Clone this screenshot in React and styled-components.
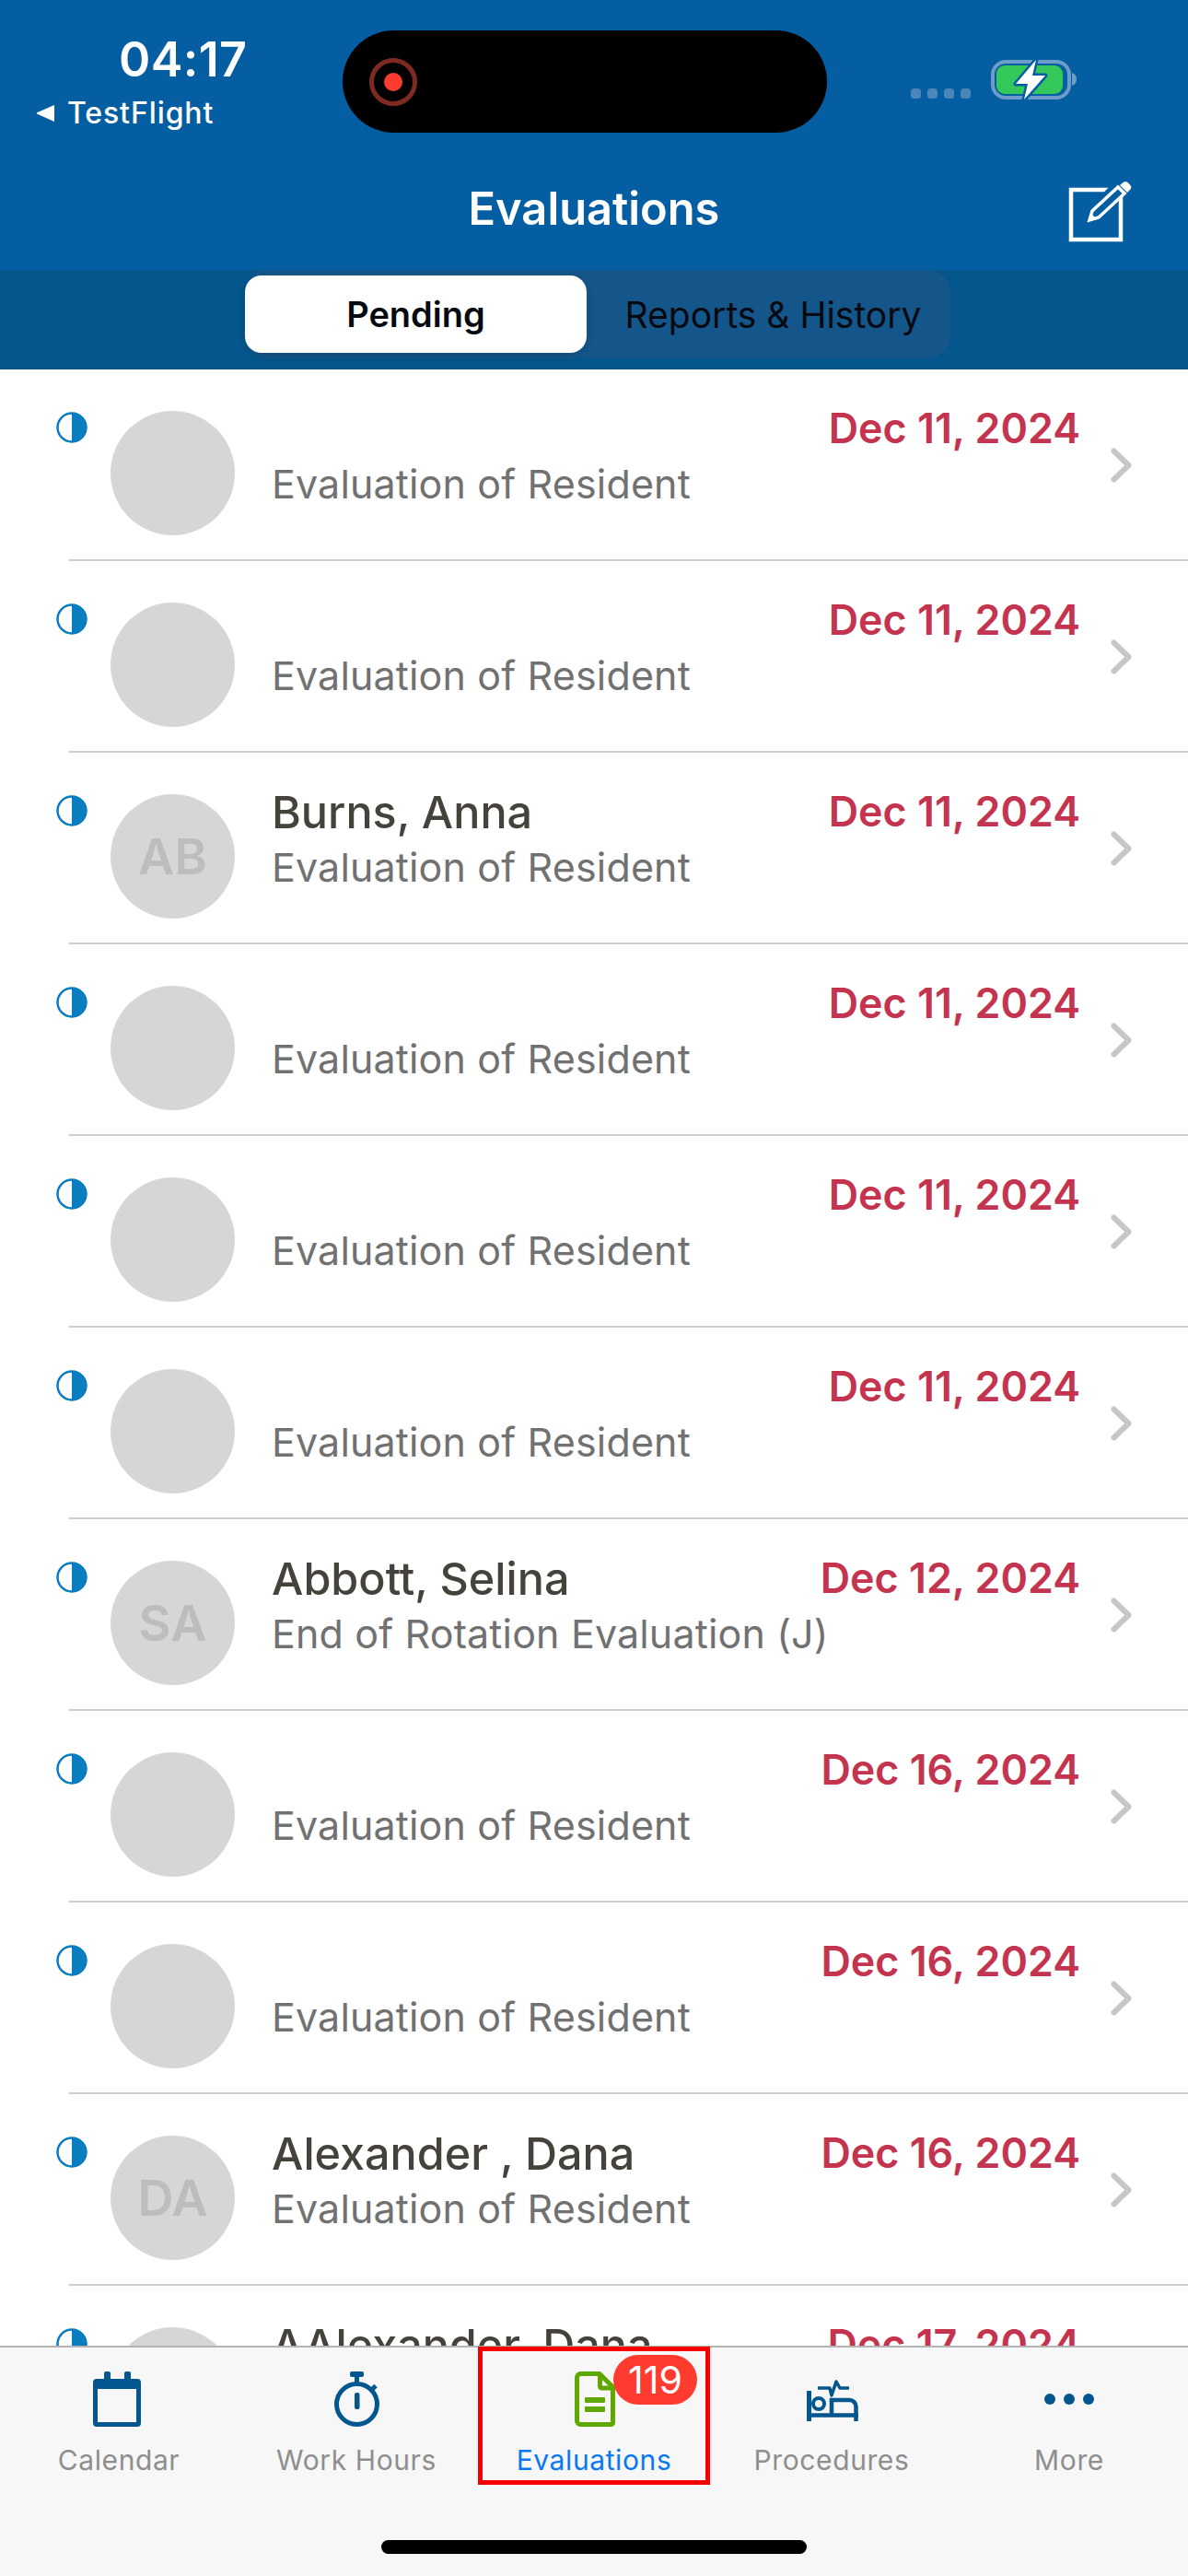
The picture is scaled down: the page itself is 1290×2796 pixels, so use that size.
import React from "react";
import styled, { createGlobalStyle } from "styled-components";

const Global = createGlobalStyle`
  html, body { margin: 0; padding: 0; background: #fff; }
  * { box-sizing: border-box; }
`;

const Page = styled.div`
  width: 1290px;
  height: 2796px;
  display: flex;
  flex-direction: column;
  overflow: hidden;
  font-family: Inter, "Liberation Sans", sans-serif;
  background: #fff;
`;

const Header = styled.header`
  background: #045ea1;
  flex: none;
`;

const StatusBar = styled.div`
  height: 168px;
  display: grid;
  grid-template-columns: 372px 526px 1fr;
  padding-top: 33px;
`;

const StatusLeft = styled.div`
  display: flex;
  flex-direction: column;
  color: #fff;
`;

const Clock = styled.div`
  font-size: 52px;
  font-weight: 600;
  line-height: 60px;
  margin: 2px 0 0 129px;
  letter-spacing: 0.4px;
`;

const BackLink = styled.div`
  display: flex;
  align-items: center;
  gap: 13px;
  margin: 9px 0 0 38px;
  font-size: 32px;
  font-weight: 500;
  line-height: 38px;
  letter-spacing: 0.9px;
`;

const Island = styled.div`
  width: 526px;
  height: 111px;
  border-radius: 56px;
  background: #000;
  display: flex;
  align-items: center;
  padding-left: 29px;
`;

const StatusRight = styled.div`
  padding: 30px 0 0 91px;
`;

const TitleBar = styled.div`
  height: 125px;
  display: flex;
  align-items: flex-start;
  justify-content: center;
  position: relative;
`;

const Title = styled.h1`
  margin: 27px 0 0;
  font-size: 48.8px;
  line-height: 64px;
  font-weight: 600;
  color: #fff;
`;

const ComposeButton = styled.div`
  position: absolute;
  right: 60px;
  top: 29px;
  line-height: 0;
`;

const SegmentStrip = styled.div`
  height: 108px;
  background: #05568c;
  display: flex;
  justify-content: center;
`;

const Segments = styled.div`
  width: 766px;
  height: 96px;
  margin-left: 8px;
  border-radius: 24px;
  background: #14568a;
  display: flex;
  align-items: flex-start;
  padding-top: 6px;
`;

const Segment = styled.div`
  width: ${(p) => (p.$active ? "371px" : "395px")};
  height: 84px;
  padding-left: ${(p) => (p.$active ? "0" : "10px")};
  border-radius: 18px;
  display: flex;
  align-items: center;
  justify-content: center;
  font-size: ${(p) => (p.$active ? "38px" : "39px")};
  color: #050a10;
  font-weight: ${(p) => (p.$active ? 600 : 400)};
  background: ${(p) => (p.$active ? "#fff" : "transparent")};
  box-shadow: ${(p) => (p.$active ? "0 3px 8px rgba(0,0,0,.12)" : "none")};
`;

const List = styled.main`
  flex: 1;
  min-height: 0;
  overflow: hidden;
`;

const Row = styled.div`
  height: 206px;
  display: flex;
  align-items: flex-start;
`;

const StatusIcon = styled.svg`
  flex: none;
  width: 34px;
  height: 34px;
  margin: 46px 0 0 61px;
`;

const Avatar = styled.div`
  flex: none;
  width: 135px;
  height: 135px;
  margin: 45px 0 0 25px;
  border-radius: 50%;
  background: #d6d6d6;
  color: #bdbdbd;
  display: flex;
  align-items: center;
  justify-content: center;
  font-size: 54px;
  font-weight: 600;
`;

const TextCol = styled.div`
  flex: none;
  width: 605px;
  margin: 35px 0 0 40px;
  height: 120px;
  white-space: nowrap;
`;

const Name = styled.div`
  height: 60px;
  font-size: 48.5px;
  line-height: 60px;
  font-weight: 500;
  color: #45423b;
`;

const Sub = styled.div`
  font-size: 43px;
  line-height: 58px;
  font-weight: 400;
  color: #717171;
  letter-spacing: 0.15px;
`;

const DateText = styled.div`
  flex: none;
  width: 273px;
  margin: 36px 0 0 0;
  display: flex;
  justify-content: flex-end;
  font-size: 44.8px;
  line-height: 56px;
  font-weight: 600;
  color: #c4344f;
  white-space: nowrap;
`;

const Chevron = styled.svg`
  flex: none;
  width: 24px;
  height: 38px;
  margin: 85px 0 0 32px;
`;

const Separator = styled.div`
  height: 2px;
  margin-left: 75px;
  background: #d0d0d0;
`;

const TabBar = styled.nav`
  flex: none;
  height: 250px;
  border-top: 2px solid #b3b3b3;
  background: #f7f7f7;
  display: flex;
  flex-direction: column;
`;

const Tabs = styled.div`
  display: grid;
  grid-template-columns: repeat(5, 258px);
`;

const Tab = styled.div`
  position: relative;
  height: 148px;
  display: flex;
  flex-direction: column;
  align-items: center;
`;

const TabIcon = styled.svg`
  width: 80px;
  height: 64px;
  margin-top: 26px;
  flex: none;
`;

const TabLabel = styled.div`
  margin-top: 14px;
  font-size: 30px;
  line-height: 36px;
  letter-spacing: 0.6px;
  color: ${(p) => (p.$active ? "#0a78f0" : "#8e8e8e")};
`;

const Badge = styled.div`
  position: absolute;
  left: 150px;
  top: 8px;
  width: 91px;
  height: 54px;
  border-radius: 27px;
  background: #ff3b30;
  color: #fff;
  font-size: 41px;
  line-height: 54px;
  text-align: center;
`;

const Highlight = styled.div`
  position: absolute;
  left: 3px;
  top: -1px;
  width: 252px;
  height: 150px;
  border: 5px solid #f40000;
`;

const HomeIndicator = styled.div`
  width: 462px;
  height: 15px;
  margin: 61px auto 0;
  border-radius: 8px;
  background: #000;
`;

const rows = [
  ["", "", "Evaluation of Resident", "Dec 11, 2024"],
  ["", "", "Evaluation of Resident", "Dec 11, 2024"],
  ["AB", "Burns, Anna", "Evaluation of Resident", "Dec 11, 2024"],
  ["", "", "Evaluation of Resident", "Dec 11, 2024"],
  ["", "", "Evaluation of Resident", "Dec 11, 2024"],
  ["", "", "Evaluation of Resident", "Dec 11, 2024"],
  ["SA", "Abbott, Selina", "End of Rotation Evaluation (J)", "Dec 12, 2024"],
  ["", "", "Evaluation of Resident", "Dec 16, 2024"],
  ["", "", "Evaluation of Resident", "Dec 16, 2024"],
  ["DA", "Alexander , Dana", "Evaluation of Resident", "Dec 16, 2024"],
  ["AD", "AAlexander, Dana", "Evaluation of Resident", "Dec 17, 2024"],
];

const NAVY = "#03568e";
const GREEN = "#5fa800";

function HalfCircle() {
  return (
    <StatusIcon viewBox="0 0 34 34">
      <circle cx="17" cy="17" r="15.5" fill="#fff" stroke="#0a7cc0" strokeWidth="2.5" />
      <path d="M17 1.500a15.500 15.500 0 0 1 0 31z" fill="#0a7cc0" />
    </StatusIcon>
  );
}

function Chev() {
  return (
    <Chevron viewBox="0 0 24 38">
      <path d="M4.500 3.500L20.500 19L4.500 34.500" fill="none" stroke="#c7c7c9" strokeWidth="6" strokeLinecap="round" strokeLinejoin="round" />
    </Chevron>
  );
}

export default function App() {
  return (
    <Page>
      <Global />
      <Header>
        <StatusBar>
          <StatusLeft>
            <Clock>04:17</Clock>
            <BackLink>
              <svg width="22" height="20" viewBox="0 0 22 20">
                <path d="M21 1v18L2 10.500a1 1 0 0 1 0-1.200z" fill="#fff" />
              </svg>
              TestFlight
            </BackLink>
          </StatusLeft>
          <Island>
            <svg width="52" height="52" viewBox="0 0 52 52">
              <circle cx="26" cy="26" r="23.500" fill="none" stroke="#7e2a22" strokeWidth="5" />
              <circle cx="26" cy="26" r="10" fill="#ff3b30" />
            </svg>
          </Island>
          <StatusRight>
            <svg width="190" height="56" viewBox="0 0 190 56">
              <g fill="#4a86b9">
                <rect x="0" y="33" width="11" height="11" rx="3.500" />
                <rect x="18" y="33" width="11" height="11" rx="3.500" />
                <rect x="36" y="33" width="11" height="11" rx="3.500" />
                <rect x="54" y="33" width="11" height="11" rx="3.500" />
              </g>
              <rect x="89" y="4" width="83" height="39" rx="14" fill="none" stroke="#6d9cc8" strokeWidth="4" />
              <rect x="93" y="8" width="72" height="31" rx="9" fill="#34c759" />
              <path d="M175 16c3 1 5 3 5 7s-2 6-5 7z" fill="#6d9cc8" />
              <path d="M136 2L114 28h13l-4 17 23-26h-14z" fill="#fff" stroke="#045ea1" strokeWidth="5" strokeLinejoin="round" paintOrder="stroke" />
            </svg>
          </StatusRight>
        </StatusBar>
        <TitleBar>
          <Title>Evaluations</Title>
          <ComposeButton>
            <svg width="70" height="70" viewBox="0 0 70 70">
              <rect x="3" y="9" width="54" height="54" fill="none" stroke="#fff" strokeWidth="4.500" />
              <path d="M21 43l-1 0 4-11 30-30 7 7-30 30z" fill="#045ea1" stroke="#045ea1" strokeWidth="8" />
              <path d="M23 42l3-10L54 6l7 7-28 26z" fill="none" stroke="#fff" strokeWidth="3.500" strokeLinejoin="miter" />
              <path d="M23 43l2-8 6 6z" fill="#fff" />
              <path d="M59 1.500a4 4 0 0 1 6 0l2 2a4 4 0 0 1 0 5.500l-3 3-8-8z" fill="#fff" />
            </svg>
          </ComposeButton>
        </TitleBar>
        <SegmentStrip>
          <Segments>
            <Segment $active>Pending</Segment>
            <Segment>Reports &amp; History</Segment>
          </Segments>
        </SegmentStrip>
      </Header>
      <List>
        {rows.map(([initials, name, sub, date], i) => (
          <React.Fragment key={i}>
            <Row>
              <HalfCircle />
              <Avatar>{initials}</Avatar>
              <TextCol>
                <Name>{name}</Name>
                <Sub>{sub}</Sub>
              </TextCol>
              <DateText>{date}</DateText>
              <Chev />
            </Row>
            <Separator />
          </React.Fragment>
        ))}
      </List>
      <TabBar>
        <Tabs>
          <Tab>
            <TabIcon viewBox="0 0 80 64">
              <path fill={NAVY} fillRule="evenodd" d="M24 8V2a2 2 0 0 1 2-2h3a2 2 0 0 1 2 2v6h15V2a2 2 0 0 1 2-2h3a2 2 0 0 1 2 2v6h7a4 4 0 0 1 4 4v44a4 4 0 0 1-4 4H16a4 4 0 0 1-4-4V12a4 4 0 0 1 4-4zM17 19v36h42V19z" />
            </TabIcon>
            <TabLabel>Calendar</TabLabel>
          </Tab>
          <Tab>
            <TabIcon viewBox="0 0 80 64">
              <circle cx="40.500" cy="35.500" r="22" fill="none" stroke={NAVY} strokeWidth="5" />
              <rect x="33" y="0" width="15" height="6" rx="2" fill={NAVY} />
              <rect x="38" y="5" width="5" height="8" fill={NAVY} />
              <path d="M56.500 20l4.500-4.500" stroke={NAVY} strokeWidth="5" />
              <rect x="38" y="23" width="5.500" height="18" rx="2" fill={NAVY} />
            </TabIcon>
            <TabLabel>Work Hours</TabLabel>
          </Tab>
          <Tab>
            <TabIcon viewBox="0 0 80 64">
              <path d="M21.500 6.500a4 4 0 0 1 4-4H46L60.500 17v38.500a2 2 0 0 1-2 2h-33a4 4 0 0 1-4-4z" fill="none" stroke={GREEN} strokeWidth="5" strokeLinejoin="round" />
              <path d="M46.500 2.500V16a2 2 0 0 0 2 2H61" fill="none" stroke={GREEN} strokeWidth="5" />
              <rect x="30" y="28" width="22" height="6" rx="1" fill={GREEN} />
              <rect x="30" y="38" width="22" height="6" rx="1" fill={GREEN} />
            </TabIcon>
            <TabLabel $active>Evaluations</TabLabel>
            <Highlight />
            <Badge>119</Badge>
          </Tab>
          <Tab>
            <TabIcon viewBox="0 0 80 64">
              <g fill="none" stroke={NAVY}>
                <path d="M15.500 21v33" strokeWidth="5" />
                <path d="M15 47.500h54M66.500 54V38a7 7 0 0 0-7-7H40v16" strokeWidth="4.500" />
                <circle cx="26" cy="35" r="6" strokeWidth="4" />
                <path d="M25 18h13l2 8 5-15 4 7h10" strokeWidth="3.500" strokeLinejoin="round" />
              </g>
            </TabIcon>
            <TabLabel>Procedures</TabLabel>
          </Tab>
          <Tab>
            <TabIcon viewBox="0 0 80 64">
              <g fill={NAVY}>
                <circle cx="19" cy="30" r="6" />
                <circle cx="40" cy="30" r="6" />
                <circle cx="61" cy="30" r="6" />
              </g>
            </TabIcon>
            <TabLabel>More</TabLabel>
          </Tab>
        </Tabs>
        <HomeIndicator />
      </TabBar>
    </Page>
  );
}
